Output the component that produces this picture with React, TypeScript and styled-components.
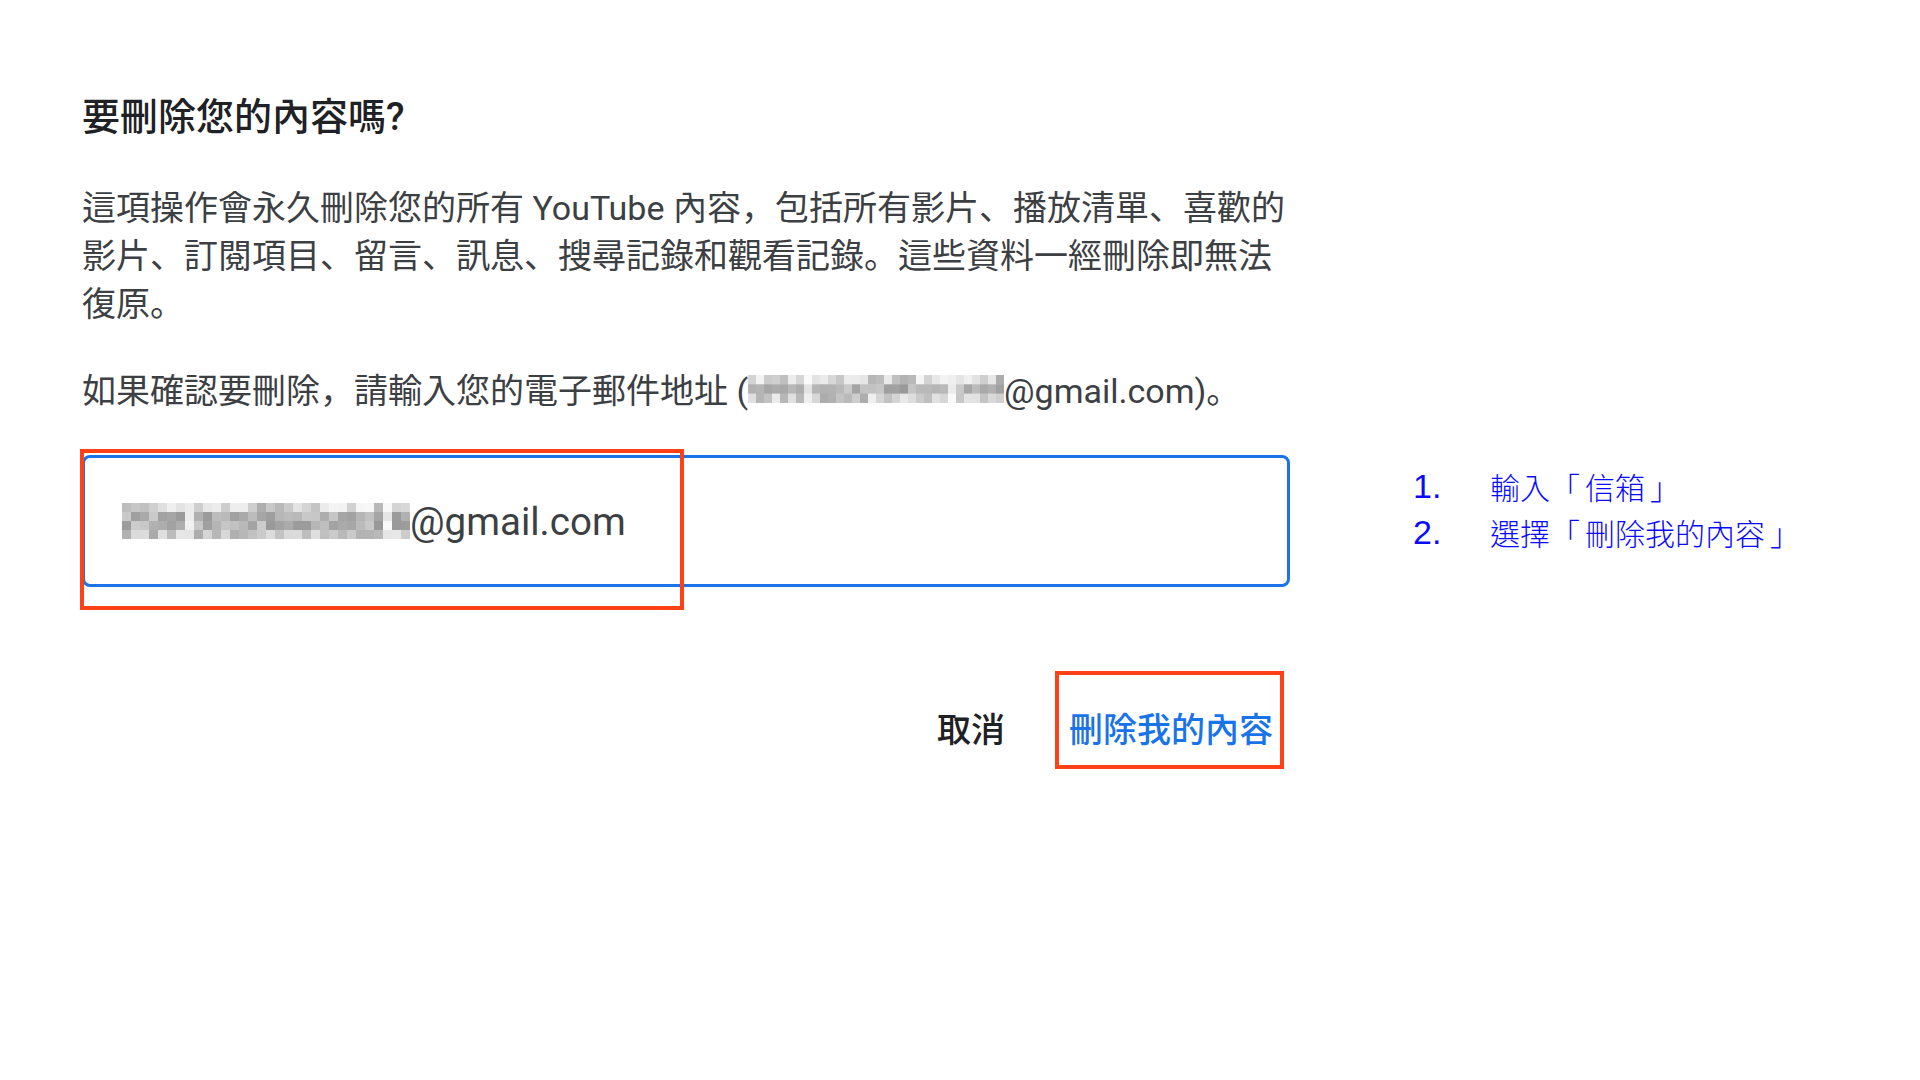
import React from "react";
import styled, { createGlobalStyle } from "styled-components";

const GlobalStyle = createGlobalStyle`
  html, body {
    margin: 0;
    padding: 0;
    background: #ffffff;
  }
  body {
    font-family: Roboto, "Noto Sans CJK JP", "Noto Sans", sans-serif;
  }
`;

const Page = styled.div`
  display: flex;
  align-items: flex-start;
  padding: 93px 0 0 82px;
  min-height: 1080px;
  box-sizing: border-box;
  background: #ffffff;
`;

const Dialog = styled.div`
  width: 1208px;
  display: flex;
  flex-direction: column;
`;

const Title = styled.h1`
  margin: 0;
  font-family: Roboto, "Noto Sans CJK JP", sans-serif;
  font-size: 38px;
  line-height: 48px;
  font-weight: 500;
  color: #202124;
  white-space: nowrap;
`;

const Paragraph = styled.p<{ $gap: number }>`
  margin: ${(p) => p.$gap}px 0 0 0;
  font-family: Roboto, "Noto Sans CJK JP", sans-serif;
  font-size: 34px;
  line-height: 48px;
  font-weight: 400;
  color: #3c4043;
  white-space: nowrap;
`;

const FieldWrap = styled.div`
  position: relative;
  margin-top: 40px;
`;

const Field = styled.div`
  height: 132px;
  box-sizing: border-box;
  border: 3px solid #1a73e8;
  border-radius: 8px;
  display: flex;
  align-items: center;
  padding-left: 37px;
  font-size: 38.5px;
  color: #3c4043;
  white-space: nowrap;
`;

const Highlight = styled.div<{ $l: number; $t: number; $w: number; $h: number }>`
  position: absolute;
  left: ${(p) => p.$l}px;
  top: ${(p) => p.$t}px;
  width: ${(p) => p.$w}px;
  height: ${(p) => p.$h}px;
  box-sizing: border-box;
  border: 4px solid #ff4117;
  pointer-events: none;
`;

const Actions = styled.div`
  margin-top: 84px;
  display: flex;
  justify-content: flex-end;
  align-items: flex-start;
  gap: 36px;
  padding-right: 3px;
`;

const TextButton = styled.button<{ $primary?: boolean }>`
  position: relative;
  height: 98px;
  box-sizing: border-box;
  padding: 14px 14px 0 14px;
  display: flex;
  align-items: center;
  background: transparent;
  border: none;
  font-family: Roboto, "Noto Sans CJK JP", sans-serif;
  font-size: 34px;
  font-weight: 500;
  color: ${(p) => (p.$primary ? "#1a73e8" : "#202124")};
  cursor: pointer;
`;

const Notes = styled.ol`
  list-style: none;
  margin: 0 0 0 123px;
  padding: 370px 0 0 0;
  display: flex;
  flex-direction: column;
`;

const NoteItem = styled.li`
  display: flex;
  align-items: center;
  height: 46px;
  color: #0a0aff;
  white-space: nowrap;
`;

const NoteNum = styled.span`
  width: 77px;
  font-family: "Liberation Sans", Arial, sans-serif;
  font-size: 34px;
`;

const NoteText = styled.span`
  font-family: "Noto Sans CJK TC", sans-serif;
  font-size: 30px;
  font-weight: 300;
`;

const OpenBracket = styled.span`
  margin-right: 5px;
`;

const CloseBracket = styled.span`
  margin-left: 5px;
`;

const BlurSvg = styled.svg`
  display: inline-block;
`;

function rand(seed: number) {
  const x = Math.sin(seed * 12.9898 + 78.233) * 43758.5453;
  return x - Math.floor(x);
}

function Pixelated({
  cols,
  rows,
  cw,
  rh,
  seed,
}: {
  cols: number;
  rows: number;
  cw: number;
  rh: number;
  seed: number;
}) {
  const rects: React.ReactNode[] = [];
  for (let c = 0; c < cols; c++) {
    const colLight = rand(seed + c * 3.1) > 0.86;
    for (let r = 0; r < rows; r++) {
      const edge = r === 0 || r === rows - 1;
      const v = rand(seed + c * 17.3 + r * 5.7);
      let g: number;
      if (colLight) {
        g = 215 + v * 35;
      } else if (edge) {
        g = 170 + v * 70;
      } else {
        g = 150 + v * 55;
      }
      if (r === 0 && rand(seed + c * 7.7) > 0.6) g = 225 + v * 25;
      const gi = Math.round(Math.min(250, g));
      rects.push(
        <rect
          key={`${c}-${r}`}
          x={c * cw}
          y={r * rh}
          width={cw + 0.5}
          height={rh + 0.5}
          fill={`rgb(${gi},${gi},${gi})`}
        />
      );
    }
  }
  return (
    <BlurSvg width={cols * cw} height={rows * rh} viewBox={`0 0 ${cols * cw} ${rows * rh}`}>
      {rects}
    </BlurSvg>
  );
}

export default function App() {
  return (
    <>
      <GlobalStyle />
      <Page>
        <Dialog>
          <Title>要刪除您的內容嗎?</Title>
          <Paragraph $gap={43}>
            這項操作會永久刪除您的所有 YouTube 內容，包括所有影片、播放清單、喜歡的
            <br />
            影片、訂閱項目、留言、訊息、搜尋記錄和觀看記錄。這些資料一經刪除即無法
            <br />
            復原。
          </Paragraph>
          <Paragraph $gap={39}>
            如果確認要刪除，請輸入您的電子郵件地址 (
            <Pixelated cols={32} rows={3} cw={8} rh={9.3} seed={11} />
            @gmail.com)。
          </Paragraph>
          <FieldWrap>
            <Field>
              <Pixelated cols={32} rows={4} cw={9} rh={9} seed={4} />
              @gmail.com
            </Field>
            <Highlight $l={-2} $t={-6} $w={604} $h={161} />
          </FieldWrap>
          <Actions>
            <TextButton>取消</TextButton>
            <TextButton $primary>
              刪除我的內容
              <Highlight $l={0} $t={0} $w={229} $h={98} />
            </TextButton>
          </Actions>
        </Dialog>
        <Notes>
          <NoteItem>
            <NoteNum>1.</NoteNum>
            <NoteText>
              輸入<OpenBracket>「</OpenBracket>信箱<CloseBracket>」</CloseBracket>
            </NoteText>
          </NoteItem>
          <NoteItem>
            <NoteNum>2.</NoteNum>
            <NoteText>
              選擇<OpenBracket>「</OpenBracket>刪除我的內容<CloseBracket>」</CloseBracket>
            </NoteText>
          </NoteItem>
        </Notes>
      </Page>
    </>
  );
}
